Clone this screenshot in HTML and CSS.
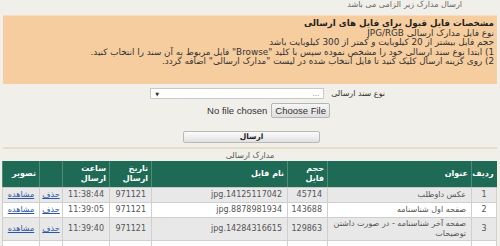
FILE: index.html
```html
<!DOCTYPE html>
<html lang="fa" dir="rtl">
<head>
<meta charset="utf-8">
<link rel="stylesheet" href="styles.css">
</head>
<body>
<div class="top-note">ارسال مدارک زیر الزامی می باشد</div>
<div class="notice">
  <div class="notice-title">مشخصات فایل قبول برای فایل های ارسالی</div>
  <div>نوع فایل مدارک ارسالی JPG/RGB</div>
  <div>حجم فایل بیشتر از 20 کیلوبایت و کمتر از 300 کیلوبایت باشد</div>
  <div>1) ابتدا نوع سند ارسالی خود را مشخص نموده سپس با کلید "Browse" فایل مربوط به آن سند را انتخاب کنید.</div>
  <div>2) روی گزینه ارسال کلیک کنید تا فایل انتخاب شده در لیست "مدارک ارسالی" اضافه گردد.</div>
</div>
<div class="form">
  <div class="row row-select">
    <span class="label">نوع سند ارسالی</span>
    <div class="select"><span>...</span><span class="arrow">▼</span></div>
  </div>
  <div class="row row-file">
    <span class="file-btn">Choose File</span>
    <span class="file-text">No file chosen</span>
  </div>
  <div class="row row-submit">
    <button class="submit" type="button">ارسال</button>
  </div>
</div>
<div class="divider"></div>
<div class="caption">مدارک ارسالی</div>
<table class="docs">
  <colgroup>
    <col class="c-num">
    <col class="c-title">
    <col class="c-size">
    <col class="c-name">
    <col class="c-date">
    <col class="c-time">
    <col class="c-del">
    <col class="c-view">
  </colgroup>
  <thead>
    <tr>
      <th>ردیف</th>
      <th>عنوان</th>
      <th>حجم<br>فایل</th>
      <th>نام فایل</th>
      <th>تاریخ<br>ارسال</th>
      <th>ساعت<br>ارسال</th>
      <th></th>
      <th>تصویر</th>
    </tr>
  </thead>
  <tbody>
    <tr class="odd">
      <td class="t-num">1</td>
      <td>عکس داوطلب</td>
      <td>45714</td>
      <td>14125117042.jpg</td>
      <td>971121</td>
      <td>11:38:44</td>
      <td class="t-link"><a href="#">حذف</a></td>
      <td class="t-link"><a href="#">مشاهده</a></td>
    </tr>
    <tr>
      <td class="t-num">2</td>
      <td>صفحه اول شناسنامه</td>
      <td>143688</td>
      <td>8878981934.jpg</td>
      <td>971121</td>
      <td>11:39:05</td>
      <td class="t-link"><a href="#">حذف</a></td>
      <td class="t-link"><a href="#">مشاهده</a></td>
    </tr>
    <tr class="odd">
      <td class="t-num">3</td>
      <td>صفحه آخر شناسنامه - در صورت داشتن توضیحات</td>
      <td>129863</td>
      <td>14284316615.jpg</td>
      <td>971121</td>
      <td>11:39:40</td>
      <td class="t-link"><a href="#">حذف</a></td>
      <td class="t-link"><a href="#">مشاهده</a></td>
    </tr>
    <tr>
      <td class="t-num">&nbsp;</td>
      <td></td><td></td><td></td><td></td><td></td><td></td><td></td>
    </tr>
  </tbody>
</table>
</body>
</html>
```
FILE: styles.css
```css
html, body {
  margin: 0;
  padding: 0;
}
body {
  background: #f1efea;
  font-family: "DejaVu Sans", sans-serif;
  font-size: 8px;
  color: #333;
  direction: rtl;
  overflow: hidden;
}
.top-note {
  padding-right: 38px;
  line-height: 9px;
  color: #666;
}
.notice {
  margin: 6px 3px 0 3px;
  height: 69px;
  box-sizing: border-box;
  background: #f6cd9e;
  border-top: 1px solid #f8dcbc;
  padding: 3px 3px 0 0;
  font-size: 8.8px;
  line-height: 9.4px;
  color: #333;
}
.notice-title {
  font-weight: bold;
  font-size: 8.7px;
  color: #222;
  margin-bottom: 0.5px;
}
.form {
  display: flex;
  flex-direction: column;
}
.row {
  display: flex;
  align-items: center;
}
.row-select {
  margin-top: 4px;
  padding-right: 115px;
  gap: 7px;
  height: 11px;
}
.label {
  color: #333;
}
.select {
  width: 174px;
  height: 11px;
  box-sizing: border-box;
  background: #fff;
  border: 1px solid #c9c9c9;
  display: flex;
  justify-content: space-between;
  align-items: center;
  padding: 0 4px;
  color: #777;
  font-size: 7px;
}
.select .arrow {
  font-size: 5px;
  color: #333;
}
.row-file {
  margin-top: 4px;
  padding-right: 170px;
  gap: 4px;
  font-family: "Liberation Sans", Arial, sans-serif;
  font-size: 9.5px;
  color: #333;
}
.file-btn {
  border: 1px solid #b5b5b5;
  background: linear-gradient(#f6f6f6, #dedede);
  border-radius: 2px;
  padding: 1px 3px;
  line-height: 11px;
}
.row-submit {
  margin-top: 13px;
  padding-right: 180px;
}
.submit {
  width: 137px;
  height: 12px;
  padding: 0;
  font-family: "DejaVu Sans", sans-serif;
  font-size: 7.5px;
  font-weight: bold;
  color: #222;
  border: 1px solid #b9b9b9;
  border-radius: 2px;
  background: linear-gradient(#fbfbfb, #e1e1e1);
  line-height: 10px;
}
.divider {
  margin: 4px 3px 0 3px;
  height: 2px;
  background: #eadcc6;
}
.caption {
  text-align: center;
  color: #555;
  line-height: 10px;
  margin-top: 2px;
}
.docs {
  margin: 0 3px 0 3px;
  width: 494px;
  border-collapse: collapse;
  table-layout: fixed;
  color: #555;
}
.docs th, .docs td {
  box-sizing: border-box;
}
.docs th {
  background: #1e6a55;
  color: #fff;
  font-weight: bold;
  font-size: 8px;
  line-height: 10px;
  height: 26px;
  padding: 0 3px;
  text-align: right;
  border-left: 1px solid #4e8b78;
  border-bottom: 1px solid #c9c9c9;
  overflow: hidden;
}
.docs td {
  border: 1px solid #cfcfcf;
  padding: 1px 5px 1px 3px;
  height: 15px;
  line-height: 10px;
  text-align: right;
  vertical-align: middle;
  background: #fff;
  overflow: hidden;
}
.docs tr.odd td {
  background: #e8e8e8;
}
.docs td.t-num {
  text-align: center;
  padding: 1px 2px;
}
.docs td.t-link {
  text-align: center;
  padding: 1px 2px;
}
.docs a {
  color: #2a56a5;
}
col.c-num { width: 25px; }
col.c-title { width: 144px; }
col.c-size { width: 40px; }
col.c-name { width: 136px; }
col.c-date { width: 42px; }
col.c-time { width: 47px; }
col.c-del { width: 23px; }
col.c-view { width: 37px; }
```
